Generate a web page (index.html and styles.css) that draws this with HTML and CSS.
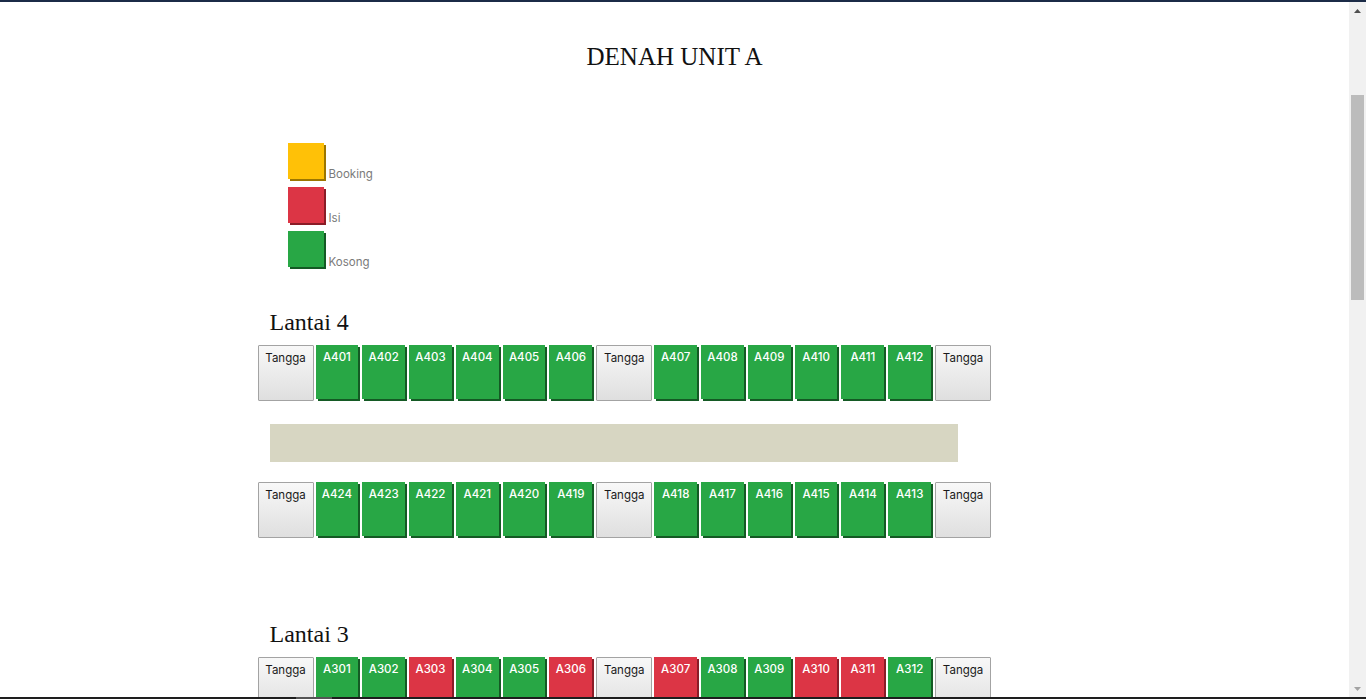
FILE: index.html
```html
<!DOCTYPE html>
<html lang="id">
<head>
<meta charset="utf-8">
<title>Denah Unit A</title>
<link rel="stylesheet" href="styles.css">
</head>
<body>
<div class="window">
  <div class="frame-top"></div>
  <div class="viewport">
    <main class="page">
      <h1 class="title">DENAH UNIT A</h1>
      <div class="plan">
        <ul class="legend">
          <li class="legend-item"><span class="swatch booking"></span><span class="legend-label">Booking</span></li>
          <li class="legend-item"><span class="swatch isi"></span><span class="legend-label">Isi</span></li>
          <li class="legend-item"><span class="swatch kosong"></span><span class="legend-label">Kosong</span></li>
        </ul>

        <section class="floor">
          <h2 class="floor-name">Lantai 4</h2>
          <div class="units">
            <div class="stairs">Tangga</div>
            <div class="unit kosong">A401</div>
            <div class="unit kosong">A402</div>
            <div class="unit kosong">A403</div>
            <div class="unit kosong">A404</div>
            <div class="unit kosong">A405</div>
            <div class="unit kosong">A406</div>
            <div class="stairs">Tangga</div>
            <div class="unit kosong">A407</div>
            <div class="unit kosong">A408</div>
            <div class="unit kosong">A409</div>
            <div class="unit kosong">A410</div>
            <div class="unit kosong">A411</div>
            <div class="unit kosong">A412</div>
            <div class="stairs">Tangga</div>
          </div>
          <div class="corridor"></div>
          <div class="units">
            <div class="stairs">Tangga</div>
            <div class="unit kosong">A424</div>
            <div class="unit kosong">A423</div>
            <div class="unit kosong">A422</div>
            <div class="unit kosong">A421</div>
            <div class="unit kosong">A420</div>
            <div class="unit kosong">A419</div>
            <div class="stairs">Tangga</div>
            <div class="unit kosong">A418</div>
            <div class="unit kosong">A417</div>
            <div class="unit kosong">A416</div>
            <div class="unit kosong">A415</div>
            <div class="unit kosong">A414</div>
            <div class="unit kosong">A413</div>
            <div class="stairs">Tangga</div>
          </div>
        </section>

        <section class="floor">
          <h2 class="floor-name">Lantai 3</h2>
          <div class="units">
            <div class="stairs">Tangga</div>
            <div class="unit kosong">A301</div>
            <div class="unit kosong">A302</div>
            <div class="unit isi">A303</div>
            <div class="unit kosong">A304</div>
            <div class="unit kosong">A305</div>
            <div class="unit isi">A306</div>
            <div class="stairs">Tangga</div>
            <div class="unit isi">A307</div>
            <div class="unit kosong">A308</div>
            <div class="unit kosong">A309</div>
            <div class="unit isi">A310</div>
            <div class="unit isi">A311</div>
            <div class="unit kosong">A312</div>
            <div class="stairs">Tangga</div>
          </div>
          <div class="corridor"></div>
          <div class="units">
            <div class="stairs">Tangga</div>
            <div class="unit kosong">A324</div>
            <div class="unit isi">A323</div>
            <div class="unit kosong">A322</div>
            <div class="unit kosong">A321</div>
            <div class="unit isi">A320</div>
            <div class="unit kosong">A319</div>
            <div class="stairs">Tangga</div>
            <div class="unit kosong">A318</div>
            <div class="unit isi">A317</div>
            <div class="unit kosong">A316</div>
            <div class="unit kosong">A315</div>
            <div class="unit isi">A314</div>
            <div class="unit kosong">A313</div>
            <div class="stairs">Tangga</div>
          </div>
        </section>
      </div>
    </main>
    <div class="scrollbar">
      <span class="arrow"><svg width="7" height="4" viewBox="0 0 7 4"><polygon points="0,4 3.5,0 7,4" fill="#505050"/></svg></span>
      <div class="track"><div class="thumb"></div></div>
      <span class="arrow"><svg width="7" height="4" viewBox="0 0 7 4"><polygon points="0,0 3.5,4 7,0" fill="#a3a3a3"/></svg></span>
    </div>
  </div>
  <div class="frame-bottom"><span class="hthumb"></span></div>
</div>
</body>
</html>
```
FILE: styles.css
```css
* {
  box-sizing: border-box;
}

html,
body {
  margin: 0;
  height: 100%;
  overflow: hidden;
  background: #ffffff;
}

body {
  font-family: Inter, "Noto Sans", "DejaVu Sans", sans-serif;
}

.window {
  height: 100vh;
  display: flex;
  flex-direction: column;
}

.frame-top {
  height: 2px;
  flex: none;
  background: #1b2b47;
}

.viewport {
  flex: 1;
  min-height: 0;
  display: flex;
}

.page {
  flex: 1;
  min-width: 0;
  overflow: hidden;
  background: #ffffff;
}

.title {
  margin: 0;
  padding-top: 40px;
  font-family: "Liberation Serif", "Times New Roman", serif;
  font-weight: 400;
  font-size: 25px;
  line-height: 30px;
  text-align: center;
  color: #111;
}

.plan {
  width: 834px;
  margin: 0 auto;
}

.legend {
  list-style: none;
  margin: 71px 0 0;
  padding: 0 0 0 30px;
}

.legend-item {
  display: flex;
  align-items: flex-end;
  height: 36px;
  margin-bottom: 8px;
}

.swatch {
  width: 36px;
  height: 36px;
  flex: none;
}

.swatch.booking {
  background: #ffc107;
  box-shadow: 2px 2px 0 #9c7600;
}

.swatch.isi {
  background: #dc3545;
  box-shadow: 2px 2px 0 #8a1c27;
}

.swatch.kosong {
  background: #28a745;
  box-shadow: 2px 2px 0 #145a24;
}

.legend-label {
  margin-left: 5px;
  margin-bottom: -2px;
  font-size: 11.5px;
  line-height: 13px;
  color: #7a7a7a;
}

.floor {
  margin-top: 40px;
}

.floor + .floor {
  margin-top: 81px;
}

.floor-name {
  margin: 0 0 8px;
  padding-left: 12px;
  font-family: "Liberation Serif", "Times New Roman", serif;
  font-weight: 400;
  font-size: 24px;
  line-height: 30px;
  color: #111;
}

.units {
  display: flex;
  gap: 2px;
  height: 56px;
}

.stairs {
  width: 56px;
  height: 56px;
  flex: none;
  padding-top: 5px;
  border: 1px solid #a3a3a3;
  border-radius: 1px;
  background: linear-gradient(#f8f8f8, #dfdfdf);
  color: #1a1a1a;
  font-size: 11.5px;
  line-height: 14px;
  text-align: center;
}

.unit {
  width: 42.8px;
  height: 54px;
  flex: none;
  margin-right: 2px;
  padding-top: 5px;
  color: #ffffff;
  font-size: 11.5px;
  font-weight: 500;
  line-height: 14px;
  text-align: center;
}

.unit.kosong {
  background: #28a745;
  box-shadow: 2px 2px 0 #145a24;
}

.unit.isi {
  background: #dc3545;
  box-shadow: 2px 2px 0 #8a1c27;
}

.unit.booking {
  background: #ffc107;
  box-shadow: 2px 2px 0 #9c7600;
}

.corridor {
  width: 688px;
  height: 38px;
  margin: 23px 0 20px 12px;
  background: #d7d6c2;
}

.scrollbar {
  width: 17px;
  flex: none;
  display: flex;
  flex-direction: column;
  background: #f1f1f1;
}

.arrow {
  height: 17px;
  flex: none;
  display: flex;
  align-items: center;
  justify-content: center;
}

.track {
  flex: 1;
  padding: 0 2px;
}

.thumb {
  height: 205px;
  margin-top: 76px;
  background: #bcbcbc;
}

.frame-bottom {
  height: 2px;
  flex: none;
  background: #1e1e1e;
  display: flex;
}

.hthumb {
  width: 36px;
  margin-left: 296px;
  background: #555555;
}
```
